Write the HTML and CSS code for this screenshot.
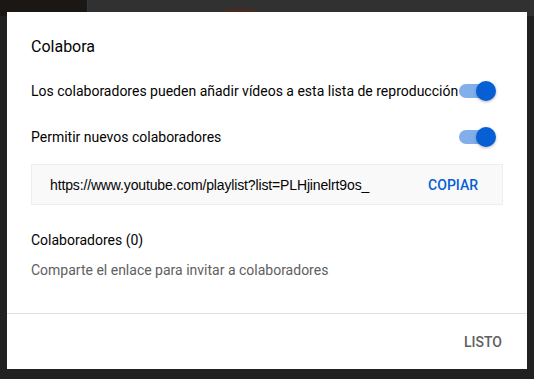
FILE: index.html
```html
<!DOCTYPE html>
<html>
	<head>
		<meta charset="UTF-8">
		<title>Colabora</title>
		<link rel="stylesheet" href="styles.css">
	</head>
	<body>
		<div class="backdrop">
			<div class="top-strip">
				<span class="thumb-dark"></span>
				<span class="thumb-red"></span>
			</div>
		</div>
		<div class="dialog">
			<div class="content">
				<h2 class="title">Colabora</h2>
				<div class="row row-first">
					<span>Los colaboradores pueden añadir vídeos a esta lista de reproducción</span>
					<span class="toggle"><span class="knob"></span></span>
				</div>
				<div class="row row-second">
					<span>Permitir nuevos colaboradores</span>
					<span class="toggle"><span class="knob"></span></span>
				</div>
				<div class="link-box">
					<span class="link">https://www.youtube.com/playlist?list=PLHjinelrt9os_</span>
					<span class="copy">COPIAR</span>
				</div>
				<div class="label">Colaboradores (0)</div>
				<div class="hint">Comparte el enlace para invitar a colaboradores</div>
			</div>
			<div class="footer">
				<span class="done">LISTO</span>
			</div>
		</div>
	</body>
</html>
```

FILE: styles.css
```css
html, body{
	margin: 0;
	padding: 0;
}
body{
	width: 534px;
	height: 379px;
	overflow: hidden;
	background: #212121;
	font-family: Roboto, "Liberation Sans", Arial, sans-serif;
	position: relative;
}
.top-strip{
	height: 16px;
	background: #313131;
	display: flex;
}
.top-strip .thumb-dark{
	width: 87px;
	height: 100%;
	background: #1b1715;
	border-right: 1px solid #2c3a44;
}
.top-strip .thumb-red{
	width: 28px;
	height: 6px;
	margin: 9px 0 0 138px;
	background: #4a2a20;
}
.dialog{
	position: absolute;
	left: 7px;
	top: 12px;
	width: 520px;
	height: 357px;
	background: #fff;
	display: flex;
	flex-direction: column;
}
.content{
	padding: 23px 24px 0 24px;
	flex: 1;
	color: #030303;
	font-size: 14px;
	line-height: 20px;
}
.title{
	margin: 0;
	font-size: 16px;
	font-weight: 400;
	line-height: 24px;
}
.row{
	display: flex;
	align-items: center;
	justify-content: space-between;
	height: 20px;
}
.row-first{
	margin-top: 22px;
}
.row-second{
	margin-top: 26px;
}
.toggle{
	width: 36px;
	height: 14px;
	margin-right: 8px;
	border-radius: 7px;
	background: #82afea;
	position: relative;
	flex-shrink: 0;
}
.toggle .knob{
	position: absolute;
	right: -1px;
	top: -3px;
	width: 20px;
	height: 20px;
	border-radius: 50%;
	background: #065fd4;
	box-shadow: 0 1px 3px rgba(0,0,0,0.3);
}
.link-box{
	margin-top: 17px;
	height: 39px;
	border: 1px solid #eeeeee;
	background: #f9f9f9;
	display: flex;
	align-items: center;
	justify-content: space-between;
	padding: 0 24px 0 18px;
	font-family: "Liberation Sans", Arial, sans-serif;
}
.link{
	letter-spacing: -0.14px;
}
.copy{
	color: #065fd4;
	font-family: Roboto, "Liberation Sans", Arial, sans-serif;
	font-weight: 500;
}
.label{
	margin-top: 25px;
}
.hint{
	margin-top: 10px;
	color: #606060;
}
.footer{
	border-top: 1px solid #e0e0e0;
	height: 55px;
	display: flex;
	align-items: center;
	justify-content: flex-end;
	padding-right: 25px;
}
.done{
	color: #606060;
	font-size: 14px;
	font-weight: 500;
}
```
